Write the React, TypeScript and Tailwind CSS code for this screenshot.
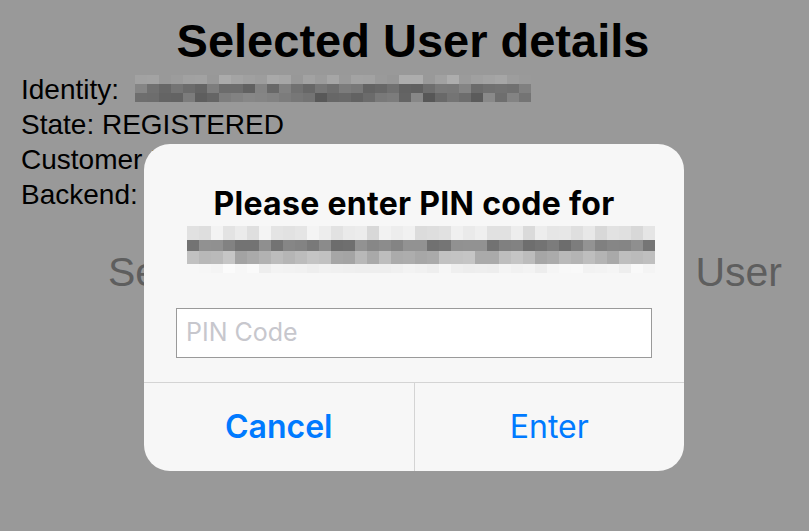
import React from "react";

function rand(seed: number) {
  let s = seed;
  return () => {
    s = (s * 9301 + 49297) % 233280;
    return s / 233280;
  };
}

function grey(v: number) {
  const h = Math.max(0, Math.min(255, Math.round(v))).toString(16).padStart(2, "0");
  return `#${h}${h}${h}`;
}

function Pixelated({
  cols,
  rows,
  seed,
  cell,
}: {
  cols: number;
  rows: { h: number; base: number; spread: number }[];
  seed: number;
  cell: number;
}) {
  const r = rand(seed);
  return (
    <div className="flex flex-col">
      {rows.map((row, ri) => (
        <div key={ri} className="flex">
          {Array.from({ length: cols }).map((_, ci) => (
            <div
              key={ci}
              style={{
                width: cell,
                height: row.h,
                background: grey(row.base + (r() - 0.5) * row.spread),
              }}
            />
          ))}
        </div>
      ))}
    </div>
  );
}

export default function App() {
  return (
    <div
      className="relative w-[809px] h-[531px] overflow-hidden bg-[#999999] text-black"
      style={{ fontFamily: "'Liberation Sans', Arial, sans-serif" }}
    >
      <div className="pt-[17px]">
        <h1 className="text-center pl-[17px] text-[47px] leading-[47px] font-bold">
          Selected User details
        </h1>
        <div className="mt-[8px] pl-[21px] text-[28px] leading-[35px]">
          <div className="flex items-center">
            <span>Identity:</span>
            <div className="ml-[16px] -mt-[3px]">
              <Pixelated
                cols={33}
                cell={12}
                seed={7}
                rows={[
                  { h: 9, base: 0xa2, spread: 24 },
                  { h: 9, base: 0x72, spread: 40 },
                  { h: 9, base: 0x70, spread: 50 },
                ]}
              />
            </div>
          </div>
          <div>State: REGISTERED</div>
          <div>Customer ID:</div>
          <div>Backend:</div>
        </div>
        <div className="mt-[36px] flex justify-between pl-[108px] pr-[27px] text-[41px] leading-[48px] text-[#5e5e5e]">
          <span>Select</span>
          <span>User</span>
        </div>
      </div>

      <div
        className="absolute left-[144px] top-[144px] w-[540px] h-[327px] rounded-[26px] bg-[#f7f7f7] flex flex-col"
        style={{ fontFamily: "Inter, 'Liberation Sans', sans-serif" }}
      >
        <div className="pt-[42px] text-center text-[32px] leading-[36px] font-bold tracking-[0.3px]">
          Please enter PIN code for
        </div>
        <div className="mt-[4px] ml-[43px]">
          <Pixelated
            cols={39}
            cell={12}
            seed={3}
            rows={[
              { h: 14, base: 0xe6, spread: 30 },
              { h: 11, base: 0x80, spread: 40 },
              { h: 13, base: 0xb4, spread: 40 },
              { h: 9, base: 0xf4, spread: 14 },
            ]}
          />
        </div>
        <div className="mt-[35px] mx-[32px] h-[50px] border border-[#9a9a9a] bg-white flex items-center pl-[9px] text-[25px] text-[#c7c7cd]">
          PIN Code
        </div>
        <div className="mt-[24px] border-t border-[#d4d4d4] flex flex-1">
          <div className="flex-1 flex items-center justify-center text-[32px] font-semibold text-[#007aff] border-r border-[#d4d4d4]">
            Cancel
          </div>
          <div className="flex-1 flex items-center justify-center text-[32px] text-[#007aff]">
            Enter
          </div>
        </div>
      </div>
    </div>
  );
}
